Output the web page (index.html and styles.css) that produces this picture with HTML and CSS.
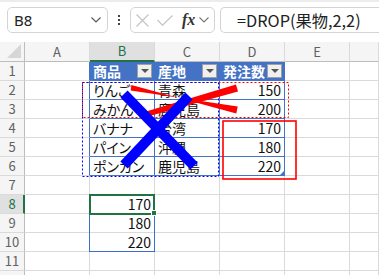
FILE: index.html
```html
<!DOCTYPE html>
<html lang="ja">
<head>
<meta charset="utf-8">
<link rel="stylesheet" href="styles.css">
</head>
<body>
<div class="app">
  <div class="bar">
    <div class="namebox">
      <span class="nb-text">B8</span>
      <svg class="chev" width="10" height="6" viewBox="0 0 10 6"><path d="M0.5 0.5 L5 5 L9.5 0.5" fill="none" stroke="#555" stroke-width="1.1"/></svg>
    </div>
    <div class="vdots"><i></i><i></i><i></i></div>
    <div class="fxbox">
      <svg class="ico-x" width="13" height="13" viewBox="0 0 13 13"><path d="M0.5 0.5 L12.5 12.5 M12.5 0.5 L0.5 12.5" stroke="#c4c4c4" stroke-width="1.2" fill="none"/></svg>
      <svg class="ico-ok" width="16" height="11" viewBox="0 0 16 11"><path d="M0.5 5 L5.5 10.2 L15.5 0.5" stroke="#c4c4c4" stroke-width="1.2" fill="none"/></svg>
      <span class="fx">fx</span>
      <svg class="chev" width="10" height="6" viewBox="0 0 10 6"><path d="M0.5 0.5 L5 5 L9.5 0.5" fill="none" stroke="#777" stroke-width="1.1"/></svg>
    </div>
    <div class="formula">=DROP(果物,2,2)</div>
  </div>
  <div class="sheet">
    <div class="corner"><span class="tri"></span></div>
    <div class="ch">A</div><div class="ch sel">B</div><div class="ch">C</div><div class="ch">D</div><div class="ch">E</div><div class="ch"></div>

    <div class="rh">1</div><div class="c tl"></div><div class="c th">商品<span class="flt"></span></div><div class="c th">産地<span class="flt"></span></div><div class="c th">発注数<span class="flt"></span></div><div class="c"></div><div class="c"></div>
    <div class="rh">2</div><div class="c tl"></div><div class="c tb">りんご</div><div class="c tb">青森</div><div class="c tb n">150</div><div class="c"></div><div class="c"></div>
    <div class="rh">3</div><div class="c tl"></div><div class="c tb">みかん</div><div class="c tb">鹿児島</div><div class="c tb n">200</div><div class="c"></div><div class="c"></div>
    <div class="rh">4</div><div class="c tl"></div><div class="c tb">バナナ</div><div class="c tb">台湾</div><div class="c tb n">170</div><div class="c"></div><div class="c"></div>
    <div class="rh">5</div><div class="c tl"></div><div class="c tb">パイン</div><div class="c tb">沖縄</div><div class="c tb n">180</div><div class="c"></div><div class="c"></div>
    <div class="rh">6</div><div class="c tl"></div><div class="c tb">ポンカン</div><div class="c tb">鹿児島</div><div class="c tb n last">220<span class="rsz"></span></div><div class="c"></div><div class="c"></div>
    <div class="rh">7</div><div class="c"></div><div class="c"></div><div class="c"></div><div class="c"></div><div class="c"></div><div class="c"></div>
    <div class="rh sel">8</div><div class="c"></div><div class="c n">170</div><div class="c"></div><div class="c"></div><div class="c"></div><div class="c"></div>
    <div class="rh">9</div><div class="c"></div><div class="c n">180</div><div class="c"></div><div class="c"></div><div class="c"></div><div class="c"></div>
    <div class="rh">10</div><div class="c"></div><div class="c n">220</div><div class="c"></div><div class="c"></div><div class="c"></div><div class="c"></div>
    <div class="rh">11</div><div class="c"></div><div class="c"></div><div class="c"></div><div class="c"></div><div class="c"></div><div class="c"></div>
    <div class="rh">12</div><div class="c"></div><div class="c"></div><div class="c"></div><div class="c"></div><div class="c"></div><div class="c"></div>
  </div>
  <svg class="overlay" width="379" height="275" viewBox="0 0 379 275">
    <!-- spill range border -->
    <rect x="89.5" y="194.5" width="65" height="57" fill="none" stroke="#3a6fcc" stroke-width="1"/>
    <!-- active cell -->
    <rect x="90" y="195" width="64" height="19" fill="none" stroke="#217346" stroke-width="2"/>
    <rect x="151.5" y="210.5" width="5" height="5" fill="#217346" stroke="#fff" stroke-width="1"/>
    <!-- dotted marquees -->
    <rect x="82.5" y="82.5" width="206" height="35" fill="none" stroke="#ff0000" stroke-width="1" stroke-dasharray="2 2"/>
    <rect x="82.5" y="82.5" width="136" height="94" fill="none" stroke="#0000ff" stroke-width="1" stroke-dasharray="2 2"/>
    <!-- red box -->
    <rect x="223" y="121" width="73" height="58" fill="none" stroke="#ff0000" stroke-width="1.6"/>
    <!-- red X -->
    <g fill="#ff0000">
      <polygon points="131.4,85 130.6,90.5 237.7,106.6 236.3,113.4"/>
      <polygon points="140.6,118.5 139.4,113.5 236,84.6 238,91.4"/>
    </g>
    <!-- blue X -->
    <g stroke="#0000ff" stroke-width="10" stroke-linecap="butt">
      <line x1="124" y1="94" x2="194" y2="166"/>
      <line x1="189" y1="96" x2="124" y2="165"/>
    </g>
  </svg>
</div>
</body>
</html>
```

FILE: styles.css
```css
* { box-sizing: border-box; margin: 0; padding: 0; }
html, body { width: 379px; height: 275px; overflow: hidden; background: #fff; }
body { font-family: "Noto Sans", "Noto Sans CJK JP", sans-serif; color: #222; }

.app { position: relative; width: 379px; height: 275px; overflow: hidden; }

.bar {
  height: 42px;
  border-top: 2px solid #ececec;
  display: flex;
  align-items: flex-start;
  padding-top: 5px;
  padding-left: 7px;
  background: #fff;
}
.namebox {
  width: 101px; height: 26px;
  border: 1px solid #d4d4d4; border-radius: 5px;
  display: flex; align-items: center; justify-content: space-between;
  padding: 0 6px 0 6px;
}
.nb-text { font-family: "Noto Sans", sans-serif; font-size: 15px; color: #222; line-height: 1; }
.chev { display: block; }
.vdots { width: 22px; height: 26px; display: flex; flex-direction: column; align-items: center; justify-content: center; gap: 2px; }
.vdots i { display: block; width: 2px; height: 2px; background: #444; }
.fxbox {
  width: 85px; height: 26px;
  border: 1px solid #d4d4d4; border-radius: 5px;
  display: flex; align-items: center;
  padding-left: 5px;
}
.ico-x { margin-right: 8px; }
.ico-ok { margin-right: 9px; }
.fx { font-family: "Liberation Serif", serif; font-style: italic; font-weight: bold; font-size: 16px; color: #333; margin-right: 4px; line-height: 1; }
.formula {
  margin-left: 5px;
  flex: 1;
  height: 26px;
  border: 1px solid #d4d4d4; border-right: none; border-radius: 5px 0 0 5px;
  font-family: "Noto Sans CJK JP", sans-serif;
  font-size: 16.3px; line-height: 24px;
  padding-left: 16px; color: #222;
}

.sheet {
  display: grid;
  grid-template-columns: 25px repeat(5, 65px) 1fr;
  grid-template-rows: 20px;
  grid-auto-rows: 19px;
  font-family: "Noto Sans CJK JP", sans-serif;
  font-feature-settings: "palt";
}
.corner {
  background: #f5f5f5;
  border-right: 1px solid #bdbdbd;
  border-bottom: 1px solid #bdbdbd;
  position: relative;
}
.tri {
  position: absolute; right: 3px; bottom: 3px;
  width: 0; height: 0;
  border-left: 14px solid transparent;
  border-bottom: 14px solid #d6d6d6;
}
.ch {
  background: #f5f5f5;
  border-right: 1px solid #dadada;
  border-bottom: 1px solid #bdbdbd;
  color: #616161; font-size: 13px; line-height: 19px; text-align: center;
}
.ch.sel { background: #e0e0e0; color: #217346; border-bottom: 2px solid #217346; line-height: 18px; }
.rh {
  background: #f5f5f5;
  border-right: 1px solid #bdbdbd;
  border-bottom: 1px solid #dadada;
  color: #616161; font-size: 13px; line-height: 18px; text-align: center;
}
.rh.sel { background: #e0e0e0; color: #217346; border-right: 2px solid #217346; padding-left: 1px; }
.c {
  border-right: 1px solid #dadada;
  border-bottom: 1px solid #dadada;
  font-size: 14px; line-height: 18px;
  padding: 0 3px;
  white-space: nowrap; overflow: hidden;
  color: #111;
  position: relative;
}
.c.n { text-align: right; }
.c.tl { border-right-color: #4472c4; }
.c.th {
  background: #4472c4; color: #fff; font-weight: bold;
  border-right-color: #4472c4; border-bottom-color: #4472c4;
}
.c.tb { border-right-color: #4472c4; border-bottom-color: #4472c4; }
.flt {
  position: absolute; right: 2px; top: 2px;
  width: 15px; height: 14px;
  background: #f0f0f0; border: 1px solid #a0a0a0;
}
.flt::after {
  content: ""; position: absolute; left: 3px; top: 4px;
  border-left: 4px solid transparent; border-right: 4px solid transparent;
  border-top: 4px solid #555;
}
.rsz {
  position: absolute; right: 0; bottom: 0;
  border-left: 4px solid transparent;
  border-bottom: 4px solid #4472c4;
}
.overlay { position: absolute; left: 0; top: 0; pointer-events: none; }
```
